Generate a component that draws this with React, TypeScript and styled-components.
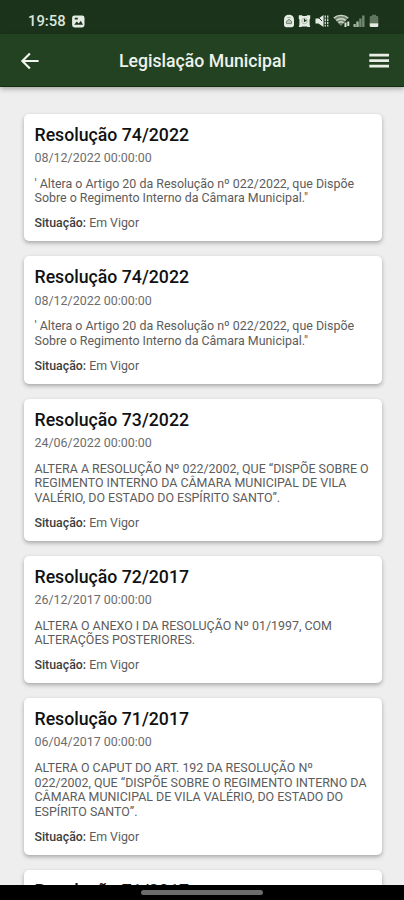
import React from "react";
import styled, { createGlobalStyle } from "styled-components";

const GlobalStyle = createGlobalStyle`
  * { box-sizing: border-box; }
  body { margin: 0; background: #eeeeee; }
`;

const Screen = styled.div`
  width: 404px;
  height: 900px;
  display: flex;
  flex-direction: column;
  overflow: hidden;
  background: #eeeeee;
  font-family: Roboto, "Liberation Sans", sans-serif;
`;

const StatusBar = styled.div`
  flex: none;
  height: 34px;
  padding: 7px 25px 0 28px;
  display: flex;
  justify-content: space-between;
  align-items: flex-start;
  background: #1c331b;
  color: #dfe6dd;
`;

const Clock = styled.div`
  display: flex;
  align-items: center;
  gap: 6px;
  font-size: 14.8px;
  font-weight: 500;
  line-height: 28px;
  height: 28px;
`;

const StatusIcons = styled.div`
  display: flex;
  align-items: center;
  height: 28px;
  gap: 3.7px;
`;

const Header = styled.header`
  flex: none;
  position: relative;
  z-index: 1;
  height: 53px;
  padding: 0 14px 0 20px;
  display: grid;
  grid-template-columns: 22px 1fr 22px;
  align-items: center;
  background: #234221;
  border-bottom: 1px solid #142e12;
  box-shadow: 0 2px 5px rgba(0, 0, 0, 0.3);
`;

const PageTitle = styled.h1`
  margin: 0;
  padding: 2px 5px 0 0;
  text-align: center;
  font-size: 17.65px;
  font-weight: 500;
  line-height: 24px;
  color: #edf2ec;
`;

const List = styled.main`
  flex: 1;
  min-height: 0;
  overflow: hidden;
  padding: 27px 22px 0 24px;
  display: flex;
  flex-direction: column;
  gap: 15.2px;
`;

const Card = styled.article`
  flex: none;
  padding: 9.9px 10px 9.2px 10.5px;
  background: #ffffff;
  border-radius: 5px;
  box-shadow: 0 2px 4px rgba(0, 0, 0, 0.3);
`;

const CardTitle = styled.h2`
  margin: 0;
  font-size: 17.7px;
  font-weight: 500;
  line-height: 22px;
  color: #111111;
`;

const DateLine = styled.div`
  margin-top: 4.4px;
  font-size: 12.45px;
  line-height: 15px;
  color: #6c6c6c;
`;

const Summary = styled.p`
  margin: 11.5px 0 10.4px;
  font-size: 12.43px;
  line-height: 14.65px;
  white-space: nowrap;
  color: #5c5c5c;
`;

const Line = styled.span`
  display: block;
`;

const Situation = styled.div`
  font-size: 12.35px;
  line-height: 15.5px;
  color: #5c5c5c;

  b {
    font-weight: 500;
    color: #3c3c3c;
  }
`;

const NavBar = styled.footer`
  flex: none;
  height: 15px;
  padding-top: 5px;
  display: flex;
  justify-content: center;
  background: #000000;
`;

const NavHandle = styled.div`
  width: 122px;
  height: 5px;
  border-radius: 3px;
  background: #6c6c6c;
`;

const PictureIcon = () => (
  <svg width="13" height="13" viewBox="0 0 13 13">
    <rect x="0.1" y="0.5" width="12.400" height="12" rx="2.4" fill="#e4ebe2" />
    <path d="M2.2 9.8 4.8 6.6l1.9 1.9 2.1-2.7 2.2 4z" fill="#1c331b" />
    <rect x="2.8" y="2.7" width="3" height="1.8" fill="#1c331b" />
  </svg>
);

const CaseIcon = () => (
  <svg width="12" height="14" viewBox="0 0 12 14">
    <path d="M1 5.500C1 2.400 3 .8 6 .8s5 1.600 5 4.700v5.300c0 1.500-.9 2.400-2.400 2.400H3.400C1.900 13.200 1 12.300 1 10.800z" fill="#e4ebe2" />
    <path d="M3.500 7.300 6 5.200l2.500 2.100v2.300h-5z" fill="#b6c2b4" stroke="#6b7e69" strokeWidth="0.900" />
    <path d="M4.300 3.500h3.400" stroke="#8b9a88" strokeWidth="0.800" />
  </svg>
);

const AlarmIcon = () => (
  <svg width="13" height="14" viewBox="0 0 13 14">
    <path d="M.8 1.300h3l1 .700h3.400l1-.700h3v3.400l-.600.800v5l.600 2.500H9.800l-1-.500H4.200l-1 .500H.8l.600-2.500v-5L.8 4.700z" fill="#e4ebe2" />
    <circle cx="6.500" cy="7" r="2.800" fill="none" stroke="#a3b0a0" strokeWidth="0.800" />
    <path d="M6.500 4.800V7.300L8.500 6.200" fill="none" stroke="#1c331b" strokeWidth="1.200" />
  </svg>
);

const MuteIcon = () => (
  <svg width="14" height="14" viewBox="0 0 14 14">
    <path d="M.5 4.500h3L8.500 1v12L3.500 9.500h-3z" fill="#e4ebe2" />
    <path d="M1.500 1.500 7 7" stroke="#1c331b" strokeWidth="1" />
    <path d="M10.300 1.500v11M12.700 1.500v11" stroke="#c3cec1" strokeWidth="1.400" strokeDasharray="2.300 0.800" />
  </svg>
);

const WifiIcon = () => (
  <svg width="17" height="14" viewBox="0 0 17 14">
    <path d="M.8 4C4.500.3 11.500.3 15.200 4L8 12z" fill="#74866f" />
    <path d="M.8 4C4.500.5 11.500.5 15.200 4M3.300 6.500c2.600-2.400 6.800-2.400 9.400 0M5.500 9c1.500-1.400 3.500-1.400 5 0" fill="none" stroke="#cdd7cb" strokeWidth="1.400" />
    <path d="M12.500 8.500v4.500M15.300 7.500v4.500" fill="none" stroke="#dbe3d9" strokeWidth="2" />
  </svg>
);

const SignalIcon = () => (
  <svg width="12" height="14" viewBox="0 0 12 14">
    <path d="M.5 13v-3h2.300v3zM3.300 13V7.500h2.400V13z" fill="#a9b6a6" />
    <path d="M6.200 13V4.500h2.400V13zM9.100 13V1.500h2.400V13z" fill="#73876f" />
  </svg>
);

const BatteryIcon = () => (
  <svg width="10" height="14" viewBox="0 0 10 14">
    <path d="M.7 3.200Q.7 2 2 2h1V.8h4V2h1q1.300 0 1.300 1.200v6H.7z" fill="#60755d" />
    <path d="M.7 9.200h8.600v2.500q0 1.300-1.300 1.300H2Q.7 13 .7 11.700z" fill="#e4ebe2" />
  </svg>
);

const BackArrow = () => (
  <svg width="20" height="20" viewBox="0 0 20 20">
    <path d="M18.600 11H3M9.900 3.500 2.400 11l7.500 7.500" fill="none" stroke="#f1f5f0" strokeWidth="2.200" />
  </svg>
);

const MenuIcon = () => (
  <svg width="22" height="17" viewBox="0 0 22 17">
    <path d="M1.300 3.100h19.700M1.300 8.600h19.700M1.300 14.100h19.700" stroke="#e9efe7" strokeWidth="2.700" />
  </svg>
);

type Law = { title: string; date: string; lines: string[] };

const laws: Law[] = [
  {
    title: "Resolução 74/2022",
    date: "08/12/2022 00:00:00",
    lines: [
      "' Altera o Artigo 20 da Resolução nº 022/2022, que Dispõe",
      'Sobre o Regimento Interno da Câmara Municipal."',
    ],
  },
  {
    title: "Resolução 74/2022",
    date: "08/12/2022 00:00:00",
    lines: [
      "' Altera o Artigo 20 da Resolução nº 022/2022, que Dispõe",
      'Sobre o Regimento Interno da Câmara Municipal."',
    ],
  },
  {
    title: "Resolução 73/2022",
    date: "24/06/2022 00:00:00",
    lines: [
      "ALTERA A RESOLUÇÃO Nº 022/2002, QUE “DISPÕE SOBRE O",
      "REGIMENTO INTERNO DA CÂMARA MUNICIPAL DE VILA",
      "VALÉRIO, DO ESTADO DO ESPÍRITO SANTO”.",
    ],
  },
  {
    title: "Resolução 72/2017",
    date: "26/12/2017 00:00:00",
    lines: [
      "ALTERA O ANEXO I DA RESOLUÇÃO Nº 01/1997, COM",
      "ALTERAÇÕES POSTERIORES.",
    ],
  },
  {
    title: "Resolução 71/2017",
    date: "06/04/2017 00:00:00",
    lines: [
      "ALTERA O CAPUT DO ART. 192 DA RESOLUÇÃO Nº",
      "022/2002, QUE “DISPÕE SOBRE O REGIMENTO INTERNO DA",
      "CÂMARA MUNICIPAL DE VILA VALÉRIO, DO ESTADO DO",
      "ESPÍRITO SANTO”.",
    ],
  },
];

const nextTitle = "Resolução 71/2017";

export default function App() {
  return (
    <>
      <GlobalStyle />
      <Screen>
        <StatusBar>
          <Clock>
            19:58
            <PictureIcon />
          </Clock>
          <StatusIcons>
            <CaseIcon />
            <AlarmIcon />
            <MuteIcon />
            <WifiIcon />
            <SignalIcon />
            <BatteryIcon />
          </StatusIcons>
        </StatusBar>
        <Header>
          <BackArrow />
          <PageTitle>Legislação Municipal</PageTitle>
          <MenuIcon />
        </Header>
        <List>
          {laws.map((law, i) => (
            <Card key={i}>
              <CardTitle>{law.title}</CardTitle>
              <DateLine>{law.date}</DateLine>
              <Summary>
                {law.lines.map((text) => (
                  <Line key={text}>{text}</Line>
                ))}
              </Summary>
              <Situation>
                <b>Situação:</b> Em Vigor
              </Situation>
            </Card>
          ))}
          <Card>
            <CardTitle>{nextTitle}</CardTitle>
          </Card>
        </List>
        <NavBar>
          <NavHandle />
        </NavBar>
      </Screen>
    </>
  );
}
